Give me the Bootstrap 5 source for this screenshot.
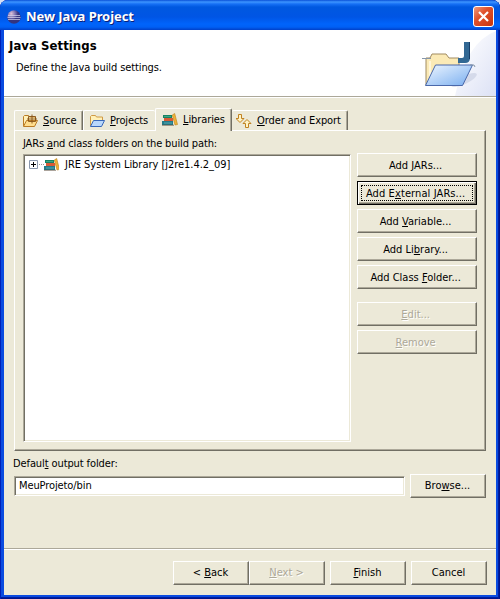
<!DOCTYPE html>
<html lang="en">
<head>
<meta charset="utf-8">
<title>New Java Project</title>
<link href="https://cdn.jsdelivr.net/npm/bootstrap@5.3.0/dist/css/bootstrap.min.css" rel="stylesheet">
<style>
body{width:500px;height:599px;overflow:hidden;background:#d5e0f5;font:11px/14px "DejaVu Sans Condensed","DejaVu Sans",sans-serif;font-stretch:condensed;color:#000;letter-spacing:-.1px}
.win{width:500px;height:599px;border-radius:8px 8px 0 0;background:#0a4be0;padding:0 4px 4px;box-shadow:inset 1px 0 #0020b8,inset -1px 0 #00138c,inset -2px 0 #001ea0,inset 0 -1px #00138c,inset 0 -2px #001ea0;overflow:hidden}
.titlebar{height:30px;margin:0 -4px;padding:3px 6px 0 7px;background:linear-gradient(#0a50d8 0,#3d95ff 2px,#1670f5 4px,#0058e0 7px,#0055e5 17px,#0064fb 24px,#0060f5 27px,#0040c8 30px)}
.caption{font:bold 13px/20px "Noto Sans","Open Sans",sans-serif;font-stretch:normal;color:#fff;text-shadow:1px 1px #0a1f78;margin:-1px 0 0 5px;letter-spacing:-.07px}
.xbtn{width:21px;height:21px;border:1px solid #fff;border-radius:3px;background:linear-gradient(135deg,#f09a7c,#e0512c 40%,#c8340c);padding:0}
.head{height:67px;background:#fff;border-bottom:1px solid #aca899;padding:9px 0 0 5px}
.head h1{font:bold 13px/14px "DejaVu Sans Condensed","DejaVu Sans",sans-serif;font-stretch:condensed;margin:0;letter-spacing:.05px}
.desc{margin-left:-1px}
.banner{width:82px;height:66px;margin-top:-9px}
.face{background:#ece9d8;height:498px;border-top:1px solid #fff;padding-top:10px}
.tabs{height:22px;margin-left:10px}
.tab{height:20px;border-top:1px solid #fff;border-left:1px solid #fff;border-right:1px solid #716f64;padding:1px 0 0 7px;border-radius:2px 2px 0 0}
.tab:not(.noedge){box-shadow:inset -1px 0 #aca899}
.tab.on{height:23px;position:relative;background:#ece9d8;margin-bottom:-1px;padding-top:0}
.panel{margin-left:10px;width:472px;height:321px;border:1px solid #fff;border-right-color:#716f64;border-bottom-color:#716f64;box-shadow:inset -1px -1px #aca899;padding:6px 8px 0 8px}
.jl{letter-spacing:-.13px}
.sunk{background:#fff;border:1px solid #fff;border-top-color:#aca899;border-left-color:#aca899;box-shadow:inset 1px 1px #716f64,inset -1px -1px #ece9d8;padding:1px}
.list{width:329px;height:288px}
.b{height:24px;border:1px solid #fff;border-right-color:#716f64;border-bottom-color:#716f64;box-shadow:inset -1px -1px #aca899;background:#ece9d8;padding:0 1px 0 0;line-height:20px;color:#000;text-align:center;font-size:11px;border-radius:0;letter-spacing:0}
.side .b{padding:1px 3px 0 0}
.b.foc{border:1px solid #000;box-shadow:inset 1px 1px #fff,inset -1px -1px #716f64,inset -2px -2px #aca899;position:relative;letter-spacing:.1px}
.b.foc::after{content:"";position:absolute;inset:3px;border:1px dotted #000}
.b.off{color:#aca899;text-shadow:1px 1px #fff}
.side{width:120px;gap:4px;margin:-1px 0 0 6px}
.w76{width:76px}
.rule{height:2px;border-top:1px solid #aca899;border-bottom:1px solid #fff}
u{text-underline-offset:1px;text-decoration-thickness:1px}
svg{display:block;flex:none}
</style>
<script src="https://cdn.jsdelivr.net/npm/bootstrap@5.3.0/dist/js/bootstrap.bundle.min.js"></script>
</head>
<body>
<svg width="0" height="0" class="d-none"><defs>
<symbol id="books" viewBox="0 0 16 16"><path d="M1 3h9v3H1z" fill="#168363"/><path d="M2 4.500h7" stroke="#3fa583"/><path d="M2 6h9v3H2z" fill="#d85b35"/><path d="M0 9h11v4H0z" fill="#237b89"/><path d="M2 11h8" stroke="#58a9b0"/><path d="M0 13.200h12" stroke="#543" stroke-width=".7"/><path d="M10.300 3l2.400-1.500 2.800 11-2.500.5z" fill="#efb238" stroke="#b98118" stroke-width=".6"/></symbol>
</defs></svg>
<div class="win">
 <div class="titlebar d-flex align-items-center">
  <svg width="14" height="14" viewBox="0 0 14 14"><defs><radialGradient id="ec" cx=".3" cy=".25"><stop stop-color="#e0c4d8"/><stop offset=".6" stop-color="#7a70b0"/><stop offset="1" stop-color="#34347f"/></radialGradient></defs><circle cx="7" cy="7" r="6.700" fill="url(#ec)"/><path d="M1 5.500h12M.5 7.500h13M1 9.500h12" stroke="#d9d8ef" stroke-width=".7"/></svg>
  <span class="caption">New Java Project</span>
  <button class="xbtn ms-auto" aria-label="Close"><svg width="19" height="19" viewBox="0 0 19 19"><path d="M5 5l9 9M14 5l-9 9" stroke="#fff" stroke-width="2.200"/></svg></button>
 </div>
 <div class="head d-flex justify-content-between">
  <div><h1>Java Settings</h1><div class="ps-2 mt-2"><span class="desc">Define the Java build settings.</span></div></div>
  <svg class="banner" viewBox="414 30 82 66"><defs><linearGradient id="bl" x2="1" y2="1"><stop stop-color="#eef6ff"/><stop offset="1" stop-color="#79aef0"/></linearGradient><linearGradient id="sw" x2="1" y2="1"><stop offset=".1" stop-color="#fff"/><stop offset="1" stop-color="#dce1f5"/></linearGradient></defs>
   <path d="M496 31Q466 42 455 96H496z" fill="url(#sw)"/>
   <ellipse cx="464" cy="80" rx="14" ry="4" fill="#c5cbe0" opacity=".6" transform="rotate(-25 464 80)"/>
   <path d="M426 85V58h4l2-4h14l3 4h10v10" fill="#fbeab6" stroke="#a18b60"/><path d="M422 58.500h9" stroke="#8797a8"/><path d="M430 79V61" stroke="#fff6da" stroke-width="2"/>
   <path d="M464 42h6v16q0 5-5 5h-7v-5h4q2 0 2-2z" fill="#326893"/><path d="M469.500 42v17" stroke="#173f69"/>
   <path d="M425.500 85.500l10-20.500h37l-10 20.500z" fill="url(#bl)" stroke="#4a68aa"/><path d="M470 65h4l1 2" fill="none" stroke="#8797a8"/></svg>
 </div>
 <div class="face">
  <div class="tabs d-flex align-items-end">
   <div class="tab d-flex align-items-center" style="width:69px"><svg width="16" height="16" viewBox="0 0 16 16" style="margin-right:5px"><path d="M1.500 13V3.500l1-1h4l1 1.500h6v3" fill="#fff0b8" stroke="#bb7c24"/><path d="M1.500 13.500l3-6h11l-3 6z" fill="#ffdd8c" stroke="#bb7c24"/><path d="M6.500 3.500h7v5h-7zM10 1.500v9M5 6h10" fill="none" stroke="#865115" stroke-width=".9"/></svg><span><u>S</u>ource</span></div>
   <div class="tab noedge d-flex align-items-center" style="width:72px;border-right:0;padding-left:5px"><svg width="16" height="16" viewBox="0 0 16 16" style="margin-right:5px"><path d="M1.500 13V3.500l1-1h4l1 1.500h6v3" fill="#fff0b8" stroke="#d09a45"/><path d="M1.500 13.500l3-6h11l-3 6z" fill="#b9d7fb" stroke="#3867b8"/></svg><span><u>P</u>rojects</span></div>
   <div class="tab on d-flex align-items-center" style="width:77px;padding-left:6px"><svg width="16" height="16" style="margin-right:5px"><use href="#books"/></svg><span><u>L</u>ibraries</span></div>
   <div class="tab d-flex align-items-center" style="width:116px;padding-left:4px;border-left:0"><svg width="16" height="16" viewBox="0 0 16 16" style="margin-right:5px"><path d="M2.500 1.500h3v4h2.500l-4 4-4-4h2.500zM9.500 14.500v-4h-2.500l4-4 4 4h-2.500v4z" fill="#fff4c6" stroke="#c18221"/></svg><span><u>O</u>rder and Export</span></div>
  </div>
  <div class="panel">
   <div class="jl"><span>JARs <u>a</u>nd class folders on the build path:</span></div>
   <div class="d-flex" style="margin-top:3px">
    <div class="sunk list"><div class="d-flex align-items-center" style="height:17px;padding-left:4px">
      <svg width="30" height="16" viewBox="0 0 30 16"><path d="M.5 3.500h8v8h-8z" fill="#fff" stroke="#8b98ad"/><path d="M2 7.500h5M4.500 5v5" stroke="#000"/><path d="M10 7.500h5" stroke="#999" stroke-dasharray="1 1"/><use href="#books" x="15" width="16" height="16"/></svg><span style="margin-left:6px;letter-spacing:-.03px">JRE System Library [j2re1.4.2_09]</span></div></div>
    <div class="side d-flex flex-column">
     <button class="b">Add <u>J</u>ARs...</button><button class="b foc">Add E<u>x</u>ternal JARs...</button><button class="b">Add <u>V</u>ariable...</button><button class="b">Add Li<u>b</u>rary...</button><button class="b">Add Class <u>F</u>older...</button>
     <button class="b off" style="margin-top:9px"><u>E</u>dit...</button><button class="b off"><u>R</u>emove</button>
    </div>
   </div>
  </div>
  <div style="margin:6px 0 0 9px"><span>Defaul<u>t</u> output folder:</span></div>
  <div class="d-flex align-items-center" style="margin:3px 0 0 10px;height:24px"><div class="sunk" style="width:391px;height:20px;padding:2px 0 0 4px"><span>MeuProjeto/bin</span></div><button class="b w76" style="margin-left:5px">Bro<u>w</u>se...</button></div>
  <div class="rule" style="margin-top:50px"></div>
  <div class="d-flex justify-content-end" style="margin:11px 9px 0 0"><button class="b w76">&lt; <u>B</u>ack</button><button class="b w76 off"><u>N</u>ext &gt;</button><button class="b w76" style="margin-left:5px"><u>F</u>inish</button><button class="b w76" style="margin-left:5px">Cancel</button></div>
 </div>
</div>
</body>
</html>
